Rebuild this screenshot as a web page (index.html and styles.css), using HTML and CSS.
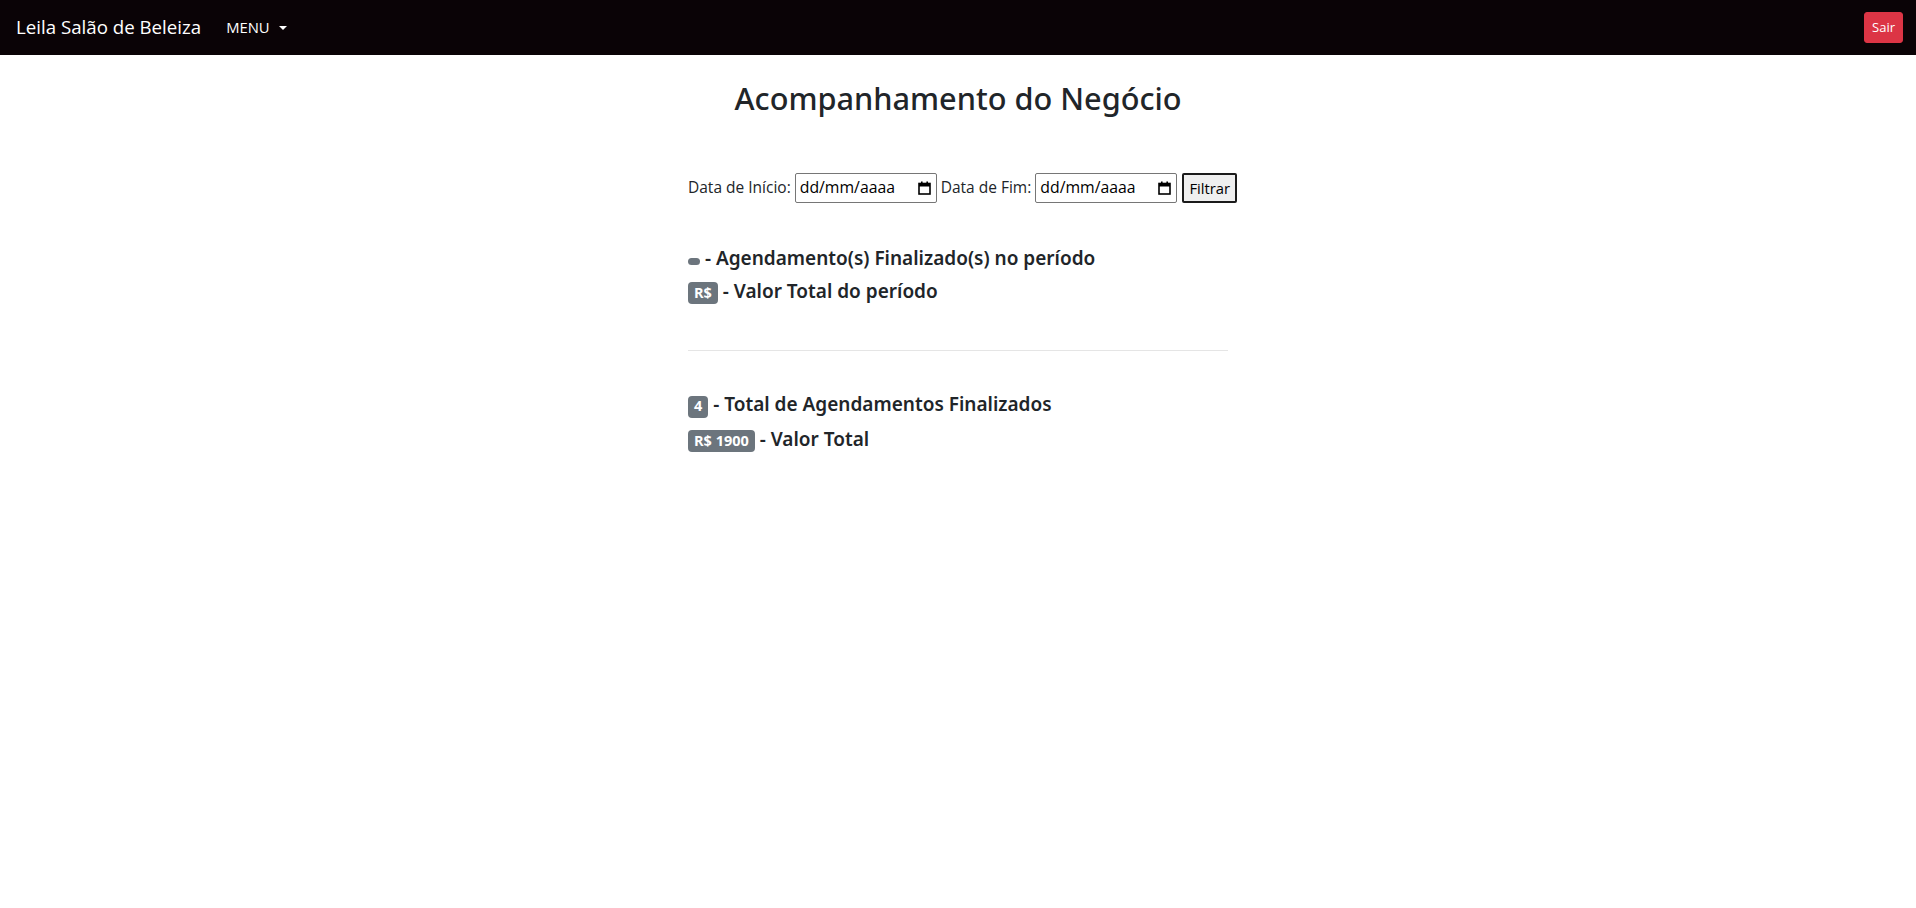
FILE: index.html
```html
<!DOCTYPE html>
<html lang="pt-BR">
<head>
<meta charset="utf-8">
<title>Acompanhamento do Negócio</title>
<link rel="stylesheet" href="styles.css">
</head>
<body>
<nav class="navbar">
  <a class="brand" href="#">Leila Salão de Beleiza</a>
  <div class="menu">MENU<span class="caret"></span></div>
  <button class="btn-sair" type="button">Sair</button>
</nav>
<main class="container">
  <h2 class="title">Acompanhamento do Negócio</h2>
  <form class="filter">
    <label class="lbl">Data de Início:</label>
    <div class="date-input"><span class="date-text">dd/mm/aaaa</span><svg class="cal" width="13" height="14" viewBox="0 0 13 14"><rect x="1" y="2.5" width="11" height="10.5" fill="none" stroke="#000" stroke-width="1.6"/><rect x="1" y="2.5" width="11" height="3" fill="#000"/><rect x="3" y="0.5" width="1.6" height="3" fill="#000"/><rect x="8.4" y="0.5" width="1.6" height="3" fill="#000"/></svg></div>
    <label class="lbl">Data de Fim:</label>
    <div class="date-input"><span class="date-text">dd/mm/aaaa</span><svg class="cal" width="13" height="14" viewBox="0 0 13 14"><rect x="1" y="2.5" width="11" height="10.5" fill="none" stroke="#000" stroke-width="1.6"/><rect x="1" y="2.5" width="11" height="3" fill="#000"/><rect x="3" y="0.5" width="1.6" height="3" fill="#000"/><rect x="8.4" y="0.5" width="1.6" height="3" fill="#000"/></svg></div>
    <button class="btn-filtrar" type="button">Filtrar</button>
  </form>
  <section class="stats stats-period">
    <h5 class="stat"><span class="badge badge-empty"> </span> - Agendamento(s) Finalizado(s) no período</h5>
    <h5 class="stat"><span class="badge">R$</span> - Valor Total do período</h5>
  </section>
  <hr class="divider">
  <section class="stats stats-total">
    <h5 class="stat"><span class="badge">4</span> - Total de Agendamentos Finalizados</h5>
    <h5 class="stat"><span class="badge">R$ 1900</span> - Valor Total</h5>
  </section>
</main>
</body>
</html>
```
FILE: styles.css
```css
html, body {
  margin: 0;
  padding: 0;
}
body {
  font-family: "Open Sans", "Noto Sans", sans-serif;
  font-size: 15.5px;
  line-height: 1.5;
  color: #212529;
  background: #fff;
}
.navbar {
  display: flex;
  align-items: center;
  height: 55px;
  padding: 0 13px 0 16px;
  background: #0a0306;
  box-sizing: border-box;
}
.brand {
  color: #fff;
  text-decoration: none;
  font-size: 18.7px;
  margin-right: 25px;
}
.menu {
  color: #fff;
  font-size: 14.8px;
  display: flex;
  align-items: center;
}
.caret {
  display: inline-block;
  margin-left: 9px;
  border-top: 4.5px solid #fff;
  border-left: 4px solid transparent;
  border-right: 4px solid transparent;
  margin-top: 1px;
}
.btn-sair {
  margin-left: auto;
  font-family: inherit;
  font-size: 13px;
  color: #fff;
  background: #dc3545;
  border: 1px solid #dc3545;
  border-radius: 3px;
  padding: 0 7px;
  height: 31px;
  line-height: 1;
  cursor: pointer;
}
.container {
  width: 540px;
  margin: 0 auto;
}
.title {
  margin: 24px 0 0;
  font-family: "Noto Sans", "Open Sans", sans-serif;
  font-size: 30.7px;
  font-weight: 500;
  line-height: 38px;
  text-align: center;
}
.filter {
  display: flex;
  align-items: center;
  margin-top: 56px;
  gap: 4px;
}
.filter > * {
  flex-shrink: 0;
}
.lbl {
  white-space: nowrap;
}
.date-input {
  display: flex;
  align-items: center;
  justify-content: space-between;
  width: 142px;
  height: 30px;
  box-sizing: border-box;
  border: 1px solid #767676;
  border-radius: 2px;
  padding: 0 5px 0 4px;
  color: #000;
}
.date-text {
  font-size: 15.8px;
}
.cal {
  display: block;
}
.btn-filtrar {
  font-family: inherit;
  font-size: 14.8px;
  color: #000;
  background: #efefef;
  border: 2px solid #1b1b1b;
  border-radius: 2px;
  height: 30px;
  width: 55px;
  padding: 0;
  margin-left: 1px;
  cursor: pointer;
}
.stats-period {
  margin-top: 43px;
}
.stat {
  margin: 0 0 9px;
  font-family: "Noto Sans", "Open Sans", sans-serif;
  font-size: 19px;
  font-weight: 600;
  line-height: 24px;
}
.badge {
  display: inline-block;
  padding: 3.75px 6px;
  font-family: "Open Sans", sans-serif;
  font-size: 14.5px;
  font-weight: 700;
  line-height: 1;
  color: #fff;
  background: #6c757d;
  border-radius: 4px;
  white-space: nowrap;
  vertical-align: baseline;
}
.divider {
  margin: 46px 0 0;
  border: 0;
  border-top: 1px solid rgba(0, 0, 0, 0.1);
  height: 0;
}
.stats-total {
  margin-top: 41px;
}
```
